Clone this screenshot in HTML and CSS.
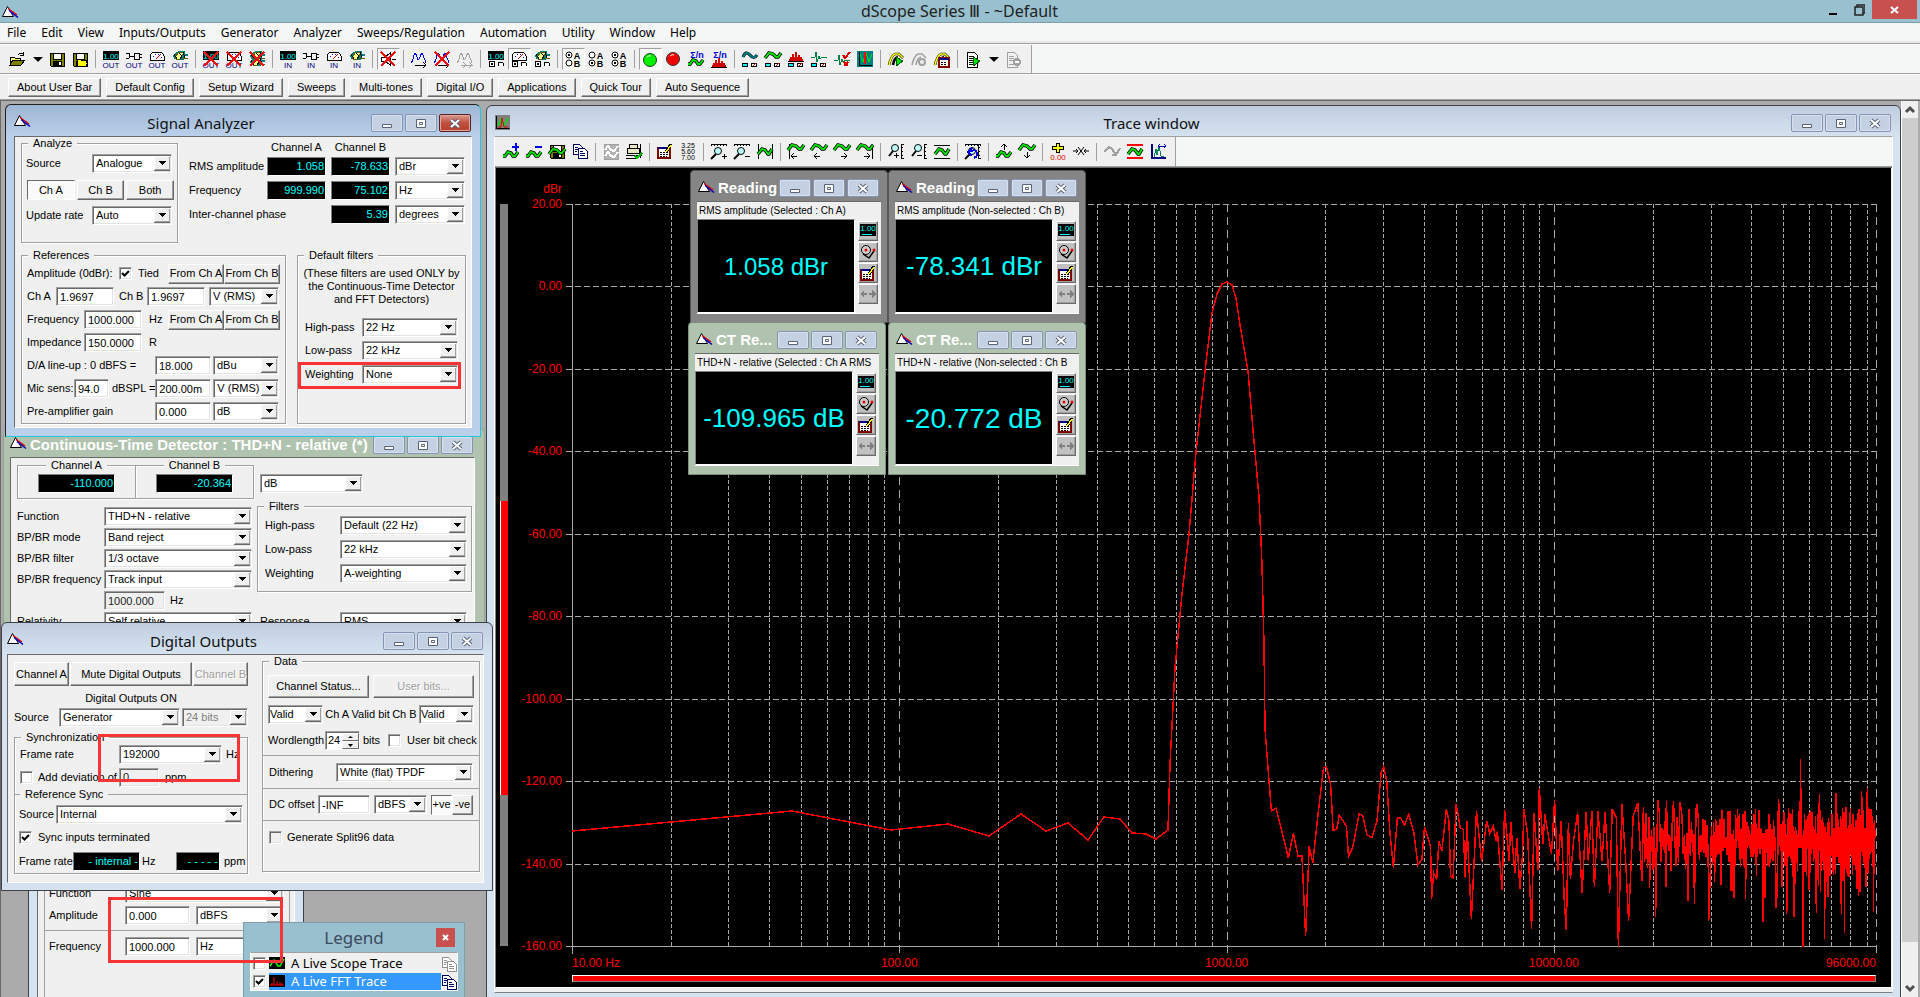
FILE: index.html
```html
<!DOCTYPE html>
<html lang="en">
<head>
<meta charset="utf-8">
<title>dScope Series III - ~Default</title>
<link rel="stylesheet" href="styles.css">
</head>
<body>
<svg class="defs" aria-hidden="true">
<defs>
<g id="logo"><path d="M0.500 11.500L5.500 1.500l6 10z" fill="#fff" stroke="#000"/><path d="M6 3.500l9 6.500" stroke="#e00000" stroke-width="1.500" fill="none"/><path d="M7 5.500l9 7" stroke="#0000c0" stroke-width="1.500" fill="none"/></g>
<g id="folder"><path d="M1 14V6h4l1 1h5v3" fill="#ffff80" stroke="#000"/><path d="M1 14l3-5h12l-4 5z" fill="#808000" stroke="#000"/></g>
<g id="open"><use href="#folder"/><path d="M9 4q2-3 5-1M14 1v3h-3" fill="none" stroke="#000"/></g>
<g id="disk"><path d="M1 2h14v13H2l-1-1z" fill="#808000" stroke="#000"/><path d="M4 2h8v6H4z" fill="#fff" stroke="#000"/><path d="M4 10h9v5H4z" fill="#000"/><path d="M10 11h2v3h-2z" fill="#fff"/></g>
<g id="disk2"><use href="#disk"/><path d="M5 15V8h3l1 1h5v2h2l-2 4z" fill="#ffff00" stroke="#000"/></g>
<g id="disp"><path d="M0 0h16v9H0z" fill="#000"/><text x="8" y="8" class="t8" fill="#00ffff">1.00</text></g>
<g id="out"><text x="8" y="17" class="t7" fill="#000080">OUT</text></g>
<g id="in"><text x="8" y="17" class="t7" fill="#000080">IN</text></g>
<g id="plug"><path d="M0 2h3l1 3h4M0 7h3l1-2M8 2h5v6H8zM13 3h3M13 6h3" fill="none" stroke="#000"/></g>
<g id="gauge"><path d="M1 9V5q1-3 4-4h6q3 1 4 4v4z" fill="#fff" stroke="#000"/><path d="M7 8l5-5" stroke="#e00000" fill="none"/><path d="M4 5h1M6 3h1M9 3h1M12 6h1" stroke="#00f"/></g>
<g id="fish"><path d="M1 5q3-5 8-5h4v3h3v2h-4v4H6Q2 9 1 5z" fill="#008080"/><path d="M3 6l4-5h5L8 8H4zM10 7h6" fill="#ffff80" stroke="#606000"/><path d="M7 2l3 3-2 3M11 1l2 6M2 3l3 5" stroke="#000" fill="none"/></g>
<g id="cross"><path d="M1 1l14 14M15 1L1 15" stroke="#ee1010" stroke-width="2"/></g>
<g id="radios"><circle cx="4" cy="13" r="3" fill="#fff" stroke="#000"/><circle cx="4" cy="13" r="1.5"/><path d="M10 15V12q2-2 5 0v3" fill="#fff" stroke="#000"/></g>
<g id="spk"><path d="M1 6h4l5-4v12l-5-4H1zM12 4l3-2M12 8h4M12 12l3 2" fill="none" stroke="#000"/></g>
<g id="sine"><path d="M0 12Q2 10 3 4q1-4 3 2 1 6 3 0 2-6 3-2l3 8" fill="none" stroke="#0000e0"/><path d="M4 14h11M12 11l3 3-3 3" fill="none" stroke="#000"/></g>
<g id="sineg"><path d="M0 12Q2 10 3 4q1-4 3 2 1 6 3 0 2-6 3-2l3 8M4 14h12M6 11l3 3-3 3M12 11l3 3-3 3" fill="none" stroke="#a0a0a0"/></g>
<g id="ab"><text x="12" y="8" class="t8b">A</text><text x="12" y="16" class="t8b">B</text></g>
<g id="r1"><circle cx="4" cy="4" r="3" fill="#fff" stroke="#000" class="soft"/></g>
<g id="r2"><circle cx="4" cy="12" r="3" fill="#fff" stroke="#000" class="soft"/></g>
<g id="d1"><circle cx="4" cy="4" r="1.6"/></g>
<g id="d2"><circle cx="4" cy="12" r="1.6"/></g>
<g id="green" class="soft"><circle cx="8" cy="9" r="6.5" fill="#00f000" stroke="#204020"/><path d="M5 6q2-2 4-1" stroke="#fff" fill="none"/></g>
<g id="red" class="soft"><circle cx="8" cy="8" r="6.5" fill="#f00000" stroke="#303030"/><path d="M5 5q2-2 4-1" stroke="#fff" fill="none"/></g>
<g id="sig"><text x="9" y="7" class="t8b" fill="#0000d0">Σ/n</text></g>
<g id="wave" class="soft"><path d="M0 13h2l3-4 3 1 2 3h2l3-4" fill="none" stroke="#000" stroke-width="3.500"/><path d="M0 13h2l3-4 3 1 2 3h2l3-4" fill="none" stroke="#00e000" stroke-width="2"/></g>
<g id="wavet" class="soft"><path d="M0 7l4-5 4 1 3 3h2l3-4" fill="none" stroke="#000" stroke-width="3.500"/><path d="M0 7l4-5 4 1 3 3h2l3-4" fill="none" stroke="#00e000" stroke-width="2"/></g>
<g id="teal" class="soft"><path d="M1 6q3-7 7-2t7 0" fill="none" stroke="#000" stroke-width="3"/><path d="M1 6q3-7 7-2t7 0" fill="none" stroke="#008080" stroke-width="2"/></g>
<g id="mini"><path d="M0.500 12.500h5v3h-5z" fill="#0ff" stroke="#000"/><path d="M9.500 12.500h5v3h-5z" fill="#fff" stroke="#000"/><path d="M11 15l3-3" stroke="#e00000"/></g>
<g id="fft"><path d="M1 9h14M2 7h12M5 3v5M8 1v7M11 4v4" stroke="#d00000" stroke-width="2" fill="none"/><path d="M0 10h16" stroke="#000"/></g>
<g id="imp"><path d="M0 6h4l1-5 1 10 2-6 1 3 2-2h5" stroke="#008040" fill="none"/></g>
<g id="check"><path d="M9 4l2 3 5-6" stroke="#e00000" stroke-width="2" fill="none"/><path d="M10 11l4 4M14 11l-4 4" stroke="#e00000" stroke-width="1.5"/></g>
<g id="scope"><path d="M0 0h16v16H0z" fill="#008080"/><path d="M2 1v13h13" stroke="#000" fill="none"/><path d="M3 3l3 8 3-9 3 9 3-8" stroke="#00e000" fill="none"/><path d="M8 1v12" stroke="#f00" stroke-width="2"/></g>
<g id="arch" class="soft"><path d="M1 14q2-9 6-11h4l4 4M5 14q1-7 5-8" fill="none" stroke="#000" stroke-width="2.500"/><path d="M1 14q2-9 6-11h4l4 4" fill="none" stroke="#ff0" stroke-width="1.500"/></g>
<g id="archg" class="soft"><path d="M1 14q2-9 6-11h4l4 4M5 14q1-7 5-8" fill="none" stroke="#a0a0a0" stroke-width="1.500"/><circle cx="11" cy="11" r="3" fill="none" stroke="#a0a0a0" stroke-width="2"/></g>
<g id="play"><path d="M8 6l7 4-7 5z" fill="#00e000" stroke="#006000"/></g>
<g id="table"><path d="M5 7h10v9H5z" fill="#fff" stroke="#800000" stroke-width="1.500"/><path d="M5 8h10" stroke="#000080" stroke-width="2"/><path d="M7 11h6M7 13h6" stroke="#000" stroke-dasharray="2 1"/></g>
<g id="doc"><path d="M2 1h7l3 3v12H2z" fill="#fff" stroke="#000"/><path d="M4 5h5M4 7h5M4 9h4M4 11h4M4 13h5" stroke="#000"/></g>
<g id="docg"><path d="M2 1h7l3 3v12H2z" fill="none" stroke="#a0a0a0"/><path d="M4 5h5M4 7h5M4 9h4M4 13h5" stroke="#a0a0a0"/><circle cx="12" cy="11" r="4" fill="#a0a0a0"/><path d="M10 11h4" stroke="#fff" stroke-width="2"/></g>
<g id="plus"><path d="M9 4h7M12.500 0v8" stroke="#0000e0" stroke-width="2"/></g>
<g id="minus"><path d="M9 4h7" stroke="#0000e0" stroke-width="2"/></g>
<g id="copy"><path d="M1 1h6l3 3v7H1z" fill="#fff" stroke="#000060"/><path d="M6 5h6l3 3v7H6z" fill="#fff" stroke="#000060"/><path d="M3 4h3M3 6h3M3 8h2M8 8h3M8 10h5M8 12h5" stroke="#000060"/></g>
<g id="copyg"><path d="M1 1h6l3 3v7H1z" fill="#fff" stroke="#909090"/><path d="M6 5h6l3 3v7H6z" fill="#fff" stroke="#909090"/><path d="M3 4h3M3 6h3M3 8h2M8 8h3M8 10h5M8 12h5" stroke="#909090"/></g>
<g id="wgray"><path d="M1 1h14v15H1z" fill="#b4b4b4" stroke="#a0a0a0"/><path d="M2 7l3-4 3 4 3 1 4-5M2 13l3-4 3 4 3 1 4-5" stroke="#fff" stroke-width="2" fill="none"/></g>
<g id="print"><path d="M4 1h8l-1 4H3zM1 5h12v5H1z" fill="#e8e8c0" stroke="#000"/><path d="M0 12h16M0 15h10M14 1v14" stroke="#000" fill="none"/><path d="M9 13l2 2 5-5" stroke="#00c000" stroke-width="2" fill="none"/></g>
<g id="grid"><path d="M1 5h12v10H1z" fill="#fff" stroke="#800000" stroke-width="1.500"/><path d="M1 5h12" stroke="#000080" stroke-width="2"/><path d="M3 9h9M3 11h9M3 13h7" stroke="#000" stroke-dasharray="2 1"/><path d="M9 9l5-8" stroke="#000" stroke-width="3"/><path d="M9 9l5-7" stroke="#ff0" stroke-width="1.500"/></g>
<g id="nums"><text x="8" y="5" class="t6">3.25</text><text x="8" y="11" class="t6">5.60</text><text x="8" y="17" class="t6">7.00</text></g>
<g id="ruler"><path d="M0 3V1h15v2M3 1v2M6 1v2M9 1v2M12 1v2" stroke="#000" fill="none"/></g>
<g id="lens" class="soft"><circle cx="7" cy="8" r="3.500" fill="#c0ffff" stroke="#000"/><path d="M5 11l-5 5" stroke="#000" stroke-width="2"/></g>
<g id="p"><path d="M11 13h5M13.500 11v5" stroke="#000"/></g>
<g id="m"><path d="M11 13h5" stroke="#000"/></g>
<g id="bars"><path d="M1 1v15M15 1v15" stroke="#000"/></g>
<g id="wmid" class="soft"><path d="M1 11l4-5 3 1 3 4h1l3-5" stroke="#000" stroke-width="3.500" fill="none"/><path d="M1 11l4-5 3 1 3 4h1l3-5" stroke="#00e000" stroke-width="2" fill="none"/></g>
<g id="al"><path d="M3 13h6M6 10l-3 3 3 3" stroke="#000" fill="none"/></g>
<g id="ar"><path d="M7 13h6M10 10l3 3-3 3" stroke="#000" fill="none"/></g>
<g id="vruler"><path d="M16 1h-3v14h3M13 4h2M13 8h2M13 12h2" stroke="#000" fill="none"/></g>
<g id="vlens" class="soft"><circle cx="7" cy="5" r="3.500" fill="#c0ffff" stroke="#000"/><path d="M5 8l-4 5" stroke="#000" stroke-width="2"/></g>
<g id="vp"><path d="M6 12h5M8.500 10v5" stroke="#000"/></g>
<g id="vm"><path d="M6 12h5" stroke="#000"/></g>
<g id="hl"><path d="M0 2h16M0 15h16" stroke="#000"/></g>
<g id="hlr"><path d="M0 2h16M0 15h16" stroke="#f00" stroke-width="1.500"/></g>
<g id="undo"><path d="M4 9q8-4 8 2 0 3-3 4M7 5L3 9l4 4" stroke="#0000e0" stroke-width="2" fill="none"/></g>
<g id="au"><path d="M8 7V1M5 4l3-3 3 3" stroke="#000" fill="none"/></g>
<g id="ad"><path d="M8 9v6M5 12l3 3 3-3" stroke="#000" fill="none"/></g>
<g id="cur"><path d="M6.500 0h3v3h4v3h-4v3h-3V6h-4V3h4z" fill="#ff0" stroke="#000"/><text x="8" y="17" class="t7" fill="#e00000">0.00</text></g>
<g id="star" class="soft"><path d="M0 8h5M11 8h5M5 4l6 8M11 4l-6 8M3 6l2 2-2 2M13 6l-2 2 2 2" stroke="#000" fill="none"/></g>
<g id="wg"><path d="M0 9l5-5 3 2 4 6 4-7M8 12h4" stroke="#a0a0a0" stroke-width="2" fill="none"/></g>
<g id="span"><path d="M2 1v14h14" stroke="#000080" stroke-width="1.500" fill="none"/><path d="M4 14l2-8 1 6 2-9 2 10 3 1" stroke="#008060" fill="none"/><path d="M8 3h8M10 1L8 3l2 2M14 1l2 2-2 2" stroke="#0000c0" fill="none"/></g>
<g id="bell" class="soft"><circle cx="6" cy="6" r="4.500" fill="#d0d0d0" stroke="#000"/><circle cx="6" cy="6" r="1.500" fill="#e00000"/><path d="M3 10l6 4 5-7" stroke="#000" fill="none" stroke-width="1.500"/><circle cx="14" cy="6" r="1.500" fill="#e00000"/></g>
<g id="lr"><path d="M0 8l4-4v8zM16 8l-4-4v8z" fill="#808080"/><path d="M3 7h4v2H3zM9 7h4v2H9z" fill="#808080"/></g>
<g id="dispu"><path d="M0 1h16v12H0z" fill="#000"/><text x="8" y="8" class="t8" fill="#00ffff">1.00</text><path d="M2 11h10" stroke="#0ff"/></g>
<g id="chart" class="soft"><path d="M0 0h15v15H0z" fill="#808080"/><path d="M1.500 1v12.500h13" stroke="#000" stroke-width="1" fill="none"/><path d="M3 11l3-7 3 7 4-8" stroke="#00e000" stroke-width="1.500" fill="none"/><path d="M3 12h3l1-9 2 9h4" stroke="#e00000" fill="none"/></g>
<g id="icoscope"><path d="M0 0h16v12H0z" fill="#000"/><path d="M1 9l4-6 4 6h2l4-7" stroke="#0f0" stroke-width="1.500" fill="none"/></g>
<g id="icofft"><path d="M0 0h16v12H0z" fill="#000"/><path d="M1 10h14M3 10V8M5 10V2M8 10V6M11 10V7M13 10V8" stroke="#f00" fill="none"/></g>
<g id="wmin"><path d="M10.500 9.500h9v3h-9z" fill="#fff" stroke="#5a6478"/></g>
<g id="wmax"><path d="M10.500 4.500h9v8h-9z" fill="#fff" stroke="#5a6478"/><path d="M13.500 7.500h3v2h-3z" fill="#fff" stroke="#5a6478"/></g>
<g id="wx"><path d="M11 5l8 7M19 5l-8 7" stroke="#5a6478" stroke-width="4"/><path d="M11 5l8 7M19 5l-8 7" stroke="#fff" stroke-width="2"/></g>
</defs>
</svg>

<div class="app">
<header class="titlebar">
  <svg class="ico logo"><use href="#logo"/></svg>
  <h1>dScope Series Ⅲ - ~Default</h1>
  <div class="syskeys">
    <button aria-label="Minimize"><svg class="sk"><path d="M1 11h8v2H1z"/></svg></button>
    <button aria-label="Restore"><svg class="sk"><path d="M1 5h8v8H1zM3 5V3h8v8H9" fill="none" stroke="#222" stroke-width="1.500"/></svg></button>
    <button class="x" aria-label="Close"><svg class="sk"><path d="M2 5l7 6M9 5l-7 6" stroke="#fff" stroke-width="2"/></svg></button>
  </div>
</header>
<nav class="menu"><a href="#">File</a><a href="#">Edit</a><a href="#">View</a><a href="#">Inputs/Outputs</a><a href="#">Generator</a><a href="#">Analyzer</a><a href="#">Sweeps/Regulation</a><a href="#">Automation</a><a href="#">Utility</a><a href="#">Window</a><a href="#">Help</a></nav>
<div class="toolstrip">
<div class="tools">
  <button><svg class="ico"><use href="#open"/></svg></button><button class="drop" aria-label="Open recent"></button><button><svg class="ico"><use href="#disk"/></svg></button><button><svg class="ico"><use href="#disk2"/></svg></button><i></i>
  <button><svg class="ico"><use href="#disp"/><use href="#out"/></svg></button><button><svg class="ico"><use href="#plug"/><use href="#out"/></svg></button><button><svg class="ico"><use href="#gauge"/><use href="#out"/></svg></button><button><svg class="ico"><use href="#fish"/><use href="#out"/></svg></button><i></i>
  <button><svg class="ico"><use href="#disp"/><use href="#out"/><use href="#cross"/></svg></button><button><svg class="ico"><use href="#gauge"/><use href="#out"/><use href="#cross"/></svg></button><button><svg class="ico"><use href="#fish"/><use href="#fish" y="6"/><use href="#cross"/></svg></button><i></i>
  <button><svg class="ico"><use href="#disp"/><use href="#in"/></svg></button><button><svg class="ico"><use href="#plug"/><use href="#in"/></svg></button><button><svg class="ico"><use href="#gauge"/><use href="#in"/></svg></button><button><svg class="ico"><use href="#fish"/><use href="#in"/></svg></button><i></i>
  <button class="on"><svg class="ico"><use href="#spk"/><use href="#cross"/></svg></button><i></i>
  <button><svg class="ico"><use href="#sine"/></svg></button><button><svg class="ico"><use href="#sine"/><use href="#cross"/></svg></button><button><svg class="ico"><use href="#sineg"/></svg></button><i></i>
  <button><svg class="ico"><use href="#disp"/><use href="#radios"/></svg></button><button class="on"><svg class="ico"><use href="#gauge"/><use href="#radios"/></svg></button><button><svg class="ico"><use href="#fish"/><use href="#radios"/></svg></button><i></i>
  <button class="on"><svg class="ico"><use href="#r1"/><use href="#r2"/><use href="#d1"/><use href="#ab"/></svg></button><button><svg class="ico"><use href="#r1"/><use href="#r2"/><use href="#d2"/><use href="#ab"/></svg></button><button><svg class="ico"><use href="#r1"/><use href="#r2"/><use href="#d1"/><use href="#d2"/><use href="#ab"/></svg></button><i></i>
  <button class="on"><svg class="ico"><use href="#green"/></svg></button><button><svg class="ico"><use href="#red"/></svg></button><button><svg class="ico"><use href="#wave"/><use href="#sig"/></svg></button><button><svg class="ico"><use href="#fft" y="6"/><use href="#sig"/></svg></button><i></i>
  <button><svg class="ico"><use href="#teal"/><use href="#mini"/></svg></button><button><svg class="ico"><use href="#wavet"/><use href="#mini"/></svg></button><button><svg class="ico"><use href="#fft"/><use href="#mini"/></svg></button><button><svg class="ico"><use href="#imp"/><use href="#mini"/></svg></button><button><svg class="ico"><use href="#imp" y="3"/><use href="#check"/></svg></button><button><svg class="ico"><use href="#scope"/></svg></button><i></i>
  <button><svg class="ico"><use href="#arch"/><use href="#play"/></svg></button><button><svg class="ico"><use href="#archg"/></svg></button><button><svg class="ico"><use href="#arch"/><use href="#table"/></svg></button><i></i>
  <button><svg class="ico"><use href="#doc"/><use href="#play"/></svg></button><button class="drop" aria-label="Run recent"></button><button><svg class="ico"><use href="#docg"/></svg></button>
</div>
</div>
<div class="userbar"><button>About User Bar</button><button>Default Config</button><button>Setup Wizard</button><button>Sweeps</button><button>Multi-tones</button><button>Digital I/O</button><button>Applications</button><button>Quick Tour</button><button>Auto Sequence</button></div>

<main class="desk">

<section class="win trace">
  <header class="cap"><svg class="ico"><use href="#chart"/></svg><h2>Trace window</h2><div class="keys"><button aria-label="Minimize"><svg><use href="#wmin"/></svg></button><button aria-label="Maximize"><svg><use href="#wmax"/></svg></button><button aria-label="Close"><svg><use href="#wx"/></svg></button></div></header>
  <div class="tracebody">
  <div class="toolstrip"><div class="tools">
    <button><svg class="ico"><use href="#wave"/><use href="#plus"/></svg></button><button><svg class="ico"><use href="#wave"/><use href="#minus"/></svg></button><button><svg class="ico"><use href="#disk"/><use href="#wavet" y="4"/></svg></button><button><svg class="ico"><use href="#copy"/></svg></button><i></i>
    <button><svg class="ico"><use href="#wgray"/></svg></button><button><svg class="ico"><use href="#print"/></svg></button><i></i>
    <button><svg class="ico"><use href="#grid"/></svg></button><button><svg class="ico"><use href="#nums"/></svg></button><i></i>
    <button><svg class="ico"><use href="#ruler"/><use href="#lens"/><use href="#p"/></svg></button><button><svg class="ico"><use href="#ruler"/><use href="#lens"/><use href="#m"/></svg></button><button><svg class="ico"><use href="#bars"/><use href="#wmid"/></svg></button><i></i>
    <button><svg class="ico"><path d="M1 1v15" stroke="#000"/><use href="#wavet"/><use href="#al"/></svg></button><button><svg class="ico"><use href="#wavet"/><use href="#al"/></svg></button><button><svg class="ico"><use href="#wavet"/><use href="#ar"/></svg></button><button><svg class="ico"><path d="M15 1v15" stroke="#000"/><use href="#wavet"/><use href="#ar"/></svg></button><i></i>
    <button><svg class="ico"><use href="#vlens"/><use href="#vp"/><use href="#vruler"/></svg></button><button><svg class="ico"><use href="#vlens"/><use href="#vm"/><use href="#vruler"/></svg></button><button><svg class="ico"><use href="#hl"/><use href="#wmid"/></svg></button><i></i>
    <button><svg class="ico"><use href="#ruler"/><use href="#vruler"/><use href="#lens"/><use href="#undo"/></svg></button><i></i>
    <button><svg class="ico"><use href="#wave"/><use href="#au"/></svg></button><button><svg class="ico"><use href="#wavet"/><use href="#ad"/></svg></button><i></i>
    <button><svg class="ico"><use href="#cur"/></svg></button><button><svg class="ico"><use href="#star"/></svg></button><i></i>
    <button><svg class="ico"><use href="#wg"/></svg></button><button><svg class="ico"><use href="#hlr"/><use href="#wmid"/></svg></button><button><svg class="ico"><use href="#span"/></svg></button>
  </div></div>
  <div class="chart">
    <div class="unit">dBr</div>
    <div class="yaxis">
      <div class="vbar"><span></span></div>
      <ol><li>20.00</li><li>0.00</li><li>-20.00</li><li>-40.00</li><li>-60.00</li><li>-80.00</li><li>-100.00</li><li>-120.00</li><li>-140.00</li><li>-160.00</li></ol>
    </div>
    <svg class="plot" viewBox="0 0 1304 742" preserveAspectRatio="none"><g id="gridlines"></g><polyline id="fftline"/></svg>
    <div class="xaxis">
      <div class="xlabels"><span>10.00 Hz</span><span>100.00</span><span>1000.00</span><span>10000.00</span><span>96000.00</span></div>
      <div class="hbar"></div>
    </div>
  </div>
  </div>
</section>

<section class="win reading ra">
  <header class="cap"><svg class="ico logo"><use href="#logo"/></svg><h2>Reading</h2><div class="keys"><button aria-label="Minimize"><svg><use href="#wmin"/></svg></button><button aria-label="Maximize"><svg><use href="#wmax"/></svg></button><button aria-label="Close"><svg><use href="#wx"/></svg></button></div></header>
  <div class="rbody"><p>RMS amplitude (Selected : Ch A)</p><output class="s24">1.058 dBr</output><div class="rkeys"><button aria-label="Digits"><svg class="ico"><use href="#dispu"/></svg></button><button aria-label="Alarm"><svg class="ico"><use href="#bell"/></svg></button><button aria-label="Table"><svg class="ico"><use href="#grid"/></svg></button><button disabled aria-label="Resize"><svg class="ico"><use href="#lr"/></svg></button></div></div>
</section>
<section class="win reading rb">
  <header class="cap"><svg class="ico logo"><use href="#logo"/></svg><h2>Reading</h2><div class="keys"><button aria-label="Minimize"><svg><use href="#wmin"/></svg></button><button aria-label="Maximize"><svg><use href="#wmax"/></svg></button><button aria-label="Close"><svg><use href="#wx"/></svg></button></div></header>
  <div class="rbody"><p>RMS amplitude (Non-selected : Ch B)</p><output class="s26">-78.341 dBr</output><div class="rkeys"><button aria-label="Digits"><svg class="ico"><use href="#dispu"/></svg></button><button aria-label="Alarm"><svg class="ico"><use href="#bell"/></svg></button><button aria-label="Table"><svg class="ico"><use href="#grid"/></svg></button><button disabled aria-label="Resize"><svg class="ico"><use href="#lr"/></svg></button></div></div>
</section>
<section class="win reading ct ca">
  <header class="cap"><svg class="ico logo"><use href="#logo"/></svg><h2>CT Re...</h2><div class="keys"><button aria-label="Minimize"><svg><use href="#wmin"/></svg></button><button aria-label="Maximize"><svg><use href="#wmax"/></svg></button><button aria-label="Close"><svg><use href="#wx"/></svg></button></div></header>
  <div class="rbody"><p>THD+N - relative (Selected : Ch A RMS</p><output class="s26">-109.965 dB</output><div class="rkeys"><button aria-label="Digits"><svg class="ico"><use href="#dispu"/></svg></button><button aria-label="Alarm"><svg class="ico"><use href="#bell"/></svg></button><button aria-label="Table"><svg class="ico"><use href="#grid"/></svg></button><button disabled aria-label="Resize"><svg class="ico"><use href="#lr"/></svg></button></div></div>
</section>
<section class="win reading ct cb">
  <header class="cap"><svg class="ico logo"><use href="#logo"/></svg><h2>CT Re...</h2><div class="keys"><button aria-label="Minimize"><svg><use href="#wmin"/></svg></button><button aria-label="Maximize"><svg><use href="#wmax"/></svg></button><button aria-label="Close"><svg><use href="#wx"/></svg></button></div></header>
  <div class="rbody"><p>THD+N - relative (Non-selected : Ch B</p><output class="s28">-20.772 dB</output><div class="rkeys"><button aria-label="Digits"><svg class="ico"><use href="#dispu"/></svg></button><button aria-label="Alarm"><svg class="ico"><use href="#bell"/></svg></button><button aria-label="Table"><svg class="ico"><use href="#grid"/></svg></button><button disabled aria-label="Resize"><svg class="ico"><use href="#lr"/></svg></button></div></div>
</section>

<section class="win gen">
  <div class="client"><div class="genbox">
    <div class="row"><label for="gf">Function</label><select id="gf"><option>Sine</option></select></div>
    <div class="row"><label for="ga">Amplitude</label><input id="ga" value="0.000"><select aria-label="Amplitude unit"><option>dBFS</option></select></div>
    <div class="row cut"><label for="gq">Frequency</label><input id="gq" value="1000.000"><select aria-label="Frequency unit"><option>Hz</option></select></div>
  </div></div>
</section>

<section class="win detector">
  <header class="cap"><svg class="ico logo"><use href="#logo"/></svg><h2>Continuous-Time Detector : THD+N - relative (*)</h2><div class="keys"><button aria-label="Minimize"><svg><use href="#wmin"/></svg></button><button aria-label="Maximize"><svg><use href="#wmax"/></svg></button><button aria-label="Close"><svg><use href="#wx"/></svg></button></div></header>
  <div class="client">
    <div class="chans">
      <fieldset><legend>Channel A</legend><output class="lcd">-110.000</output></fieldset>
      <fieldset><legend>Channel B</legend><output class="lcd">-20.364</output></fieldset>
      <select aria-label="Unit"><option>dB</option></select>
    </div>
    <div class="cols">
      <div class="left">
        <div class="row"><label for="d1f">Function</label><select id="d1f"><option>THD+N - relative</option></select></div>
        <div class="row"><label for="d2f">BP/BR mode</label><select id="d2f"><option>Band reject</option></select></div>
        <div class="row"><label for="d3f">BP/BR filter</label><select id="d3f"><option>1/3 octave</option></select></div>
        <div class="row"><label for="d4f">BP/BR frequency</label><select id="d4f"><option>Track input</option></select></div>
        <div class="row"><label for="d5f"></label><input id="d5f" value="1000.000" disabled><span>Hz</span></div>
        <div class="row"><label for="d6f">Relativity</label><select id="d6f"><option>Self relative</option></select></div>
      </div>
      <div class="right">
        <fieldset><legend>Filters</legend>
          <div class="row"><label for="e1">High-pass</label><select id="e1"><option>Default (22 Hz)</option></select></div>
          <div class="row"><label for="e2">Low-pass</label><select id="e2"><option>22 kHz</option></select></div>
          <div class="row"><label for="e3">Weighting</label><select id="e3"><option>A-weighting</option></select></div>
        </fieldset>
        <div class="row resp"><label for="e4">Response</label><select id="e4"><option>RMS</option></select></div>
      </div>
    </div>
  </div>
</section>

<section class="win signal">
  <header class="cap"><svg class="ico logo"><use href="#logo"/></svg><h2>Signal Analyzer</h2><div class="keys"><button aria-label="Minimize"><svg><use href="#wmin"/></svg></button><button aria-label="Maximize"><svg><use href="#wmax"/></svg></button><button class="hot" aria-label="Close"><svg><use href="#wx"/></svg></button></div></header>
  <div class="client">
    <div class="top">
      <fieldset class="analyze"><legend>Analyze</legend>
        <div class="row"><label for="s1">Source</label><select id="s1"><option>Analogue</option></select></div>
        <div class="trio"><button class="b on">Ch A</button><button class="b">Ch B</button><button class="b">Both</button></div>
        <div class="row"><label for="s2">Update rate</label><select id="s2"><option>Auto</option></select></div>
      </fieldset>
      <div class="meas">
        <span></span><span class="mid">Channel A</span><span class="mid">Channel B</span><span></span>
        <span>RMS amplitude</span><output class="lcd">1.058</output><output class="lcd">-78.633</output><select aria-label="Amplitude unit"><option>dBr</option></select>
        <span>Frequency</span><output class="lcd">999.990</output><output class="lcd">75.102</output><select aria-label="Frequency unit"><option>Hz</option></select>
        <span class="two">Inter-channel phase</span><output class="lcd">5.39</output><select aria-label="Phase unit"><option>degrees</option></select>
      </div>
    </div>
    <div class="bottom">
      <fieldset class="refs"><legend>References</legend>
        <div class="row"><span class="w92">Amplitude (0dBr):</span><input type="checkbox" id="tied" checked><label class="tied" for="tied">Tied</label><button class="b">From Ch A</button><button class="b">From Ch B</button></div>
        <div class="row"><label class="w29" for="r1i">Ch A</label><input id="r1i" class="f58" value="1.9697"><label class="chb" for="r2i">Ch B</label><input id="r2i" class="f58" value="1.9697"><select class="f70 end" aria-label="Reference unit"><option>V (RMS)</option></select></div>
        <div class="row"><label class="w57" for="r3i">Frequency</label><input id="r3i" class="f58" value="1000.000"><span class="u">Hz</span><button class="b">From Ch A</button><button class="b">From Ch B</button></div>
        <div class="row"><label class="w57" for="r4i">Impedance</label><input id="r4i" class="f58" value="150.0000"><span class="u">R</span></div>
        <div class="row"><label class="grow" for="r5i">D/A line-up : 0 dBFS =</label><input id="r5i" class="f55" value="18.000"><select class="f66" aria-label="Line-up unit"><option>dBu</option></select></div>
        <div class="row"><label class="w47" for="r6i">Mic sens:</label><input id="r6i" class="f35" value="94.0"><label class="grow spl" for="r7i">dBSPL =</label><input id="r7i" class="f55" value="200.00m"><select class="f66" aria-label="Sensitivity unit"><option>V (RMS)</option></select></div>
        <div class="row"><label class="grow" for="r8i">Pre-amplifier gain</label><input id="r8i" class="f55" value="0.000"><select class="f66" aria-label="Gain unit"><option>dB</option></select></div>
      </fieldset>
      <fieldset class="dflt"><legend>Default filters</legend>
        <p>(These filters are used ONLY by<br>the Continuous-Time Detector<br>and FFT Detectors)</p>
        <div class="row"><label for="f1">High-pass</label><select id="f1"><option>22 Hz</option></select></div>
        <div class="row"><label for="f2">Low-pass</label><select id="f2"><option>22 kHz</option></select></div>
        <div class="row wt"><label for="f3">Weighting</label><select id="f3"><option>None</option></select></div>
      </fieldset>
    </div>
  </div>
</section>

<section class="win digital">
  <header class="cap"><svg class="ico logo"><use href="#logo"/></svg><h2>Digital Outputs</h2><div class="keys"><button aria-label="Minimize"><svg><use href="#wmin"/></svg></button><button aria-label="Maximize"><svg><use href="#wmax"/></svg></button><button aria-label="Close"><svg><use href="#wx"/></svg></button></div></header>
  <div class="client">
    <div class="dleft">
      <div class="mutes"><button class="b">Channel A</button><button class="b wide">Mute Digital Outputs</button><button class="b" disabled>Channel B</button></div>
      <p class="state">Digital Outputs ON</p>
      <div class="row src"><label for="o1">Source</label><select id="o1"><option>Generator</option></select><select class="f66" aria-label="Word size" disabled><option>24 bits</option></select></div>
      <fieldset><legend>Synchronization</legend>
        <div class="row rate"><label for="o2">Frame rate</label><select id="o2"><option>192000</option></select><span>Hz</span></div>
        <div class="row dev"><input type="checkbox" id="o3"><label for="o3">Add deviation of</label><input aria-label="Deviation" value="0" disabled><span>ppm</span></div>
        <h3>Reference Sync</h3>
        <div class="row rsrc"><label for="o4">Source</label><select id="o4"><option>Internal</option></select></div>
        <div class="row term"><input type="checkbox" id="o5" checked><label for="o5">Sync inputs terminated</label></div>
        <div class="row fr"><span>Frame rate</span><output class="lcd a">- internal -</output><span class="hz">Hz</span><output class="lcd c">- - - - -</output><span>ppm</span></div>
      </fieldset>
    </div>
    <fieldset class="data"><legend>Data</legend>
      <div class="sec s1"><div class="two-b"><button class="b">Channel Status...</button><button class="b" disabled>User bits...</button></div>
      <div class="row valid"><select id="v1"><option>Valid</option></select><label for="v1">Ch A</label><span>Valid bit</span><label for="v2">Ch B</label><select id="v2"><option>Valid</option></select></div>
      <div class="row wl"><label for="v3">Wordlength</label><span class="spin"><input id="v3" value="24"><span><button aria-label="Up"><svg><path d="M5 4h5L7.500 2z"/></svg></button><button aria-label="Down"><svg><path d="M5 2h5L7.500 5z"/></svg></button></span></span><span class="bits">bits</span><input type="checkbox" id="v4"><label for="v4">User bit check</label></div></div>
      <div class="sec row dith"><label for="v5">Dithering</label><select id="v5"><option>White (flat) TPDF</option></select></div>
      <div class="sec row dc"><label for="v6">DC offset</label><input id="v6" value="-INF"><select aria-label="Offset unit"><option>dBFS</option></select><button class="b on">+ve</button><button class="b">-ve</button></div>
      <div class="sec row split"><input type="checkbox" class="off" id="v7"><label for="v7">Generate Split96 data</label></div>
    </fieldset>
  </div>
</section>

<section class="win legend">
  <header><h2>Legend</h2><button aria-label="Close"><svg><path d="M7 7l5 5M12 7l-5 5" stroke="#fff" stroke-width="2"/></svg></button></header>
  <ul>
    <li><input type="checkbox" id="l1"><label for="l1"><svg class="tr"><use href="#icoscope"/></svg>A Live Scope Trace</label><svg class="ico"><use href="#copyg"/></svg></li>
    <li class="sel"><input type="checkbox" id="l2" checked><label for="l2"><svg class="tr"><use href="#icofft"/></svg>A Live FFT Trace</label><svg class="ico"><use href="#copy"/></svg></li>
  </ul>
</section>

<div class="mark m1"></div><div class="mark m2"></div><div class="mark m3"></div>

<div class="scroll"><svg><path d="M4 11l4-4 4 4" fill="none" stroke="#505050" stroke-width="3"/></svg><span></span><svg><path d="M4 6l4 4 4-4" fill="none" stroke="#505050" stroke-width="3"/></svg></div>
</main>
</div>
<script src="chart.js"></script>
</body>
</html>
```
FILE: styles.css
```css
* { box-sizing: border-box; }
body { margin: 0; font: 11px/13px "Liberation Sans", Arial, sans-serif; color: #000; background: #ababab; }
h1, h2, h3, p, ul, ol { margin: 0; padding: 0; font-weight: normal; list-style: none; }
.defs { position: absolute; width: 0; height: 0; }
.app { display: flex; flex-direction: column; height: 100vh; overflow: hidden; }
button, input, select { font: inherit; color: inherit; margin: 0; padding: 0; border-radius: 0; min-width: 0; }
.ico { width: 17px; height: 17px; flex: none; overflow: visible; shape-rendering: crispEdges; }
.logo, .soft { shape-rendering: auto; }
text { font-family: "Liberation Sans", Arial, sans-serif; text-anchor: middle; }
.t8 { font-size: 8px; }
.t7 { font-size: 8px; }
.t6 { font-size: 7px; }
.t8b { font-size: 9px; font-weight: bold; }

/* main frame */
.titlebar { display: flex; align-items: center; height: 23px; padding: 0 3px 0 2px; background: #98c0ce; border-bottom: 1px solid #7d9faa; }
.titlebar .ico { margin-top: 4px; }
.titlebar h1 { flex: 1; text-align: center; font: 16px/22px "Noto Sans", sans-serif; color: #222; padding-left: 80px; }
.syskeys { display: flex; align-self: flex-start; }
.syskeys button { width: 26px; height: 19px; border: 0; background: none; }
.syskeys .x { width: 45px; background: #c8504f; }
.sk { width: 11px; height: 16px; display: block; margin: auto; }
.menu { display: flex; height: 22px; gap: 15px; padding: 1px 7px 0; background: #f5f6f6; border-bottom: 1px solid #fff; box-shadow: inset 0 -1px #a0a0a0, inset 0 -3px #e8e8e8; }
.menu a { color: #000; text-decoration: none; font: 12px/18px "Noto Sans", sans-serif; }
.toolstrip { display: flex; height: 30px; background: #f5f6f6; border-bottom: 1px solid #fff; box-shadow: inset 0 -1px #a0a0a0; padding-bottom: 1px; }
.tools { display: flex; align-items: center; padding: 0 6px; background: #f0f0f0; border-right: 1px solid #a0a0a0; }
.tools button { width: 23px; height: 22px; border: 1px solid transparent; background: none; display: flex; justify-content: center; align-items: center; }
.tools button.on { background: #f8f8f8; border-color: #a0a0a0 #fff #fff #a0a0a0; }
.tools button.drop { width: 17px; }
.drop::before { content: ""; border: 5px solid transparent; border-top-color: #000; border-bottom: 0; }
.tools i { width: 8px; height: 18px; background: linear-gradient(#a0a0a0, #a0a0a0) 3px 0 / 1px 100% no-repeat; }
.userbar { display: flex; gap: 5px; height: 26px; padding: 3px 8px 0; background: #f0f0f0; border-bottom: 1px solid #696969; box-shadow: inset 0 -1px #a0a0a0; }
.userbar button { height: 19px; padding: 0 8px; }
.userbar button, .b, .rkeys button { background: #f0f0f0; border: 1px solid; border-color: #fff #696969 #696969 #fff; box-shadow: inset -1px -1px #a0a0a0; white-space: nowrap; }
.b { height: 20px; padding: 0; }
.b.on { background: #fafafa; border-color: #696969 #fff #fff #696969; box-shadow: none; }
.b:disabled { color: #a0a0a0; text-shadow: 1px 1px #fff; }
.desk { position: relative; flex: 1; overflow: hidden; background: #ababab; border-left: 1px solid #696969; }

/* windows */
.win { position: absolute; border: 1px solid #404048; border-radius: 6px 6px 0 0; background: #d5e3f0; display: flex; flex-direction: column; padding: 0 8px 8px; }
.cap { display: flex; align-items: center; flex: none; height: 31px; padding: 4px 1px 0 0; }
.cap h2 { flex: 1; text-align: center; font: 15px/24px "Noto Sans", sans-serif; white-space: nowrap; overflow: hidden; color: #111; }
.keys { display: flex; gap: 2px; }
.keys button { width: 32px; height: 18px; border: 1px solid #8594b4; border-radius: 2px; background: #c3d1e3; box-shadow: inset 0 0 0 1px #d6e1ee; }
.keys svg { display: block; width: 30px; height: 16px; }
.keys .hot { border-color: #5a2020; background: linear-gradient(#d89a90, #c0503c 50%, #b84030); box-shadow: inset 0 0 0 1px #e0a8a0; }
.client { background: #f0f0f0; border: 1px solid; border-color: #696969 #fff #fff #696969; flex: 1; min-height: 0; }
fieldset { margin: 0; padding: 0; border: 1px solid #a0a0a0; min-width: 0; box-shadow: 1px 1px #fff, inset 1px 1px #fff; }
legend { padding: 0 5px; margin-left: 6px; background: #f0f0f0; line-height: 13px; }
.row { display: flex; align-items: center; white-space: nowrap; }
.row > * { flex: none; }
input:not([type]), select { height: 19px; border: 1px solid; border-color: #a0a0a0 #fff #fff #a0a0a0; box-shadow: inset 1px 1px #696969, inset -1px -1px #e3e3e3; background: #fff; padding: 0 3px; }
select { appearance: none; background: #fff url("data:image/svg+xml,%3Csvg xmlns='http://www.w3.org/2000/svg' width='17' height='15'%3E%3Cpath d='M0 0h17v15H0z' fill='%23696969'/%3E%3Cpath d='M0 0h16v14H0z' fill='%23fff'/%3E%3Cpath d='M1 1h15v13H1z' fill='%23a0a0a0'/%3E%3Cpath d='M1 1h14v12H1z' fill='%23f0f0f0'/%3E%3Cpath d='M5 5h7v1h-1v1h-1v1H9v1H8V8H7V7H6V6H5z'/%3E%3C/svg%3E") right 0 center no-repeat; padding-right: 17px; overflow: hidden; }
select:disabled, input:disabled { background-color: #f0f0f0; opacity: 1; color: #808080; }
input:not([type]):disabled { color: #222; background-color: #f0f0f0; }
input[type=checkbox] { appearance: none; width: 13px; height: 13px; border: 1px solid; border-color: #a0a0a0 #fff #fff #a0a0a0; box-shadow: inset 1px 1px #696969, inset -1px -1px #e3e3e3; background: #fff; }
input[type=checkbox]:checked { background: #fff url("data:image/svg+xml,%3Csvg xmlns='http://www.w3.org/2000/svg' width='11' height='11'%3E%3Cpath d='M2 5l2.500 2.500L9 3' fill='none' stroke='%23000' stroke-width='2'/%3E%3C/svg%3E") center no-repeat; }
input.off[type=checkbox] { background: #f0f0f0; }
.lcd { display: block; height: 19px; background: #000; color: #0ff; text-align: right; line-height: 17px; padding-right: 1px; border: 1px solid; border-color: #808080 #fff #fff #808080; overflow: hidden; white-space: nowrap; }

/* trace window */
.trace { left: 485px; right: 19px; top: 4px; bottom: -5px; background: linear-gradient(#bfcde0, #d5e3f0 31px); padding: 0 7px 8px; }
.trace .cap { height: 30px; padding: 4px 2px 0 1px; }
.tracebody { flex: 1; display: flex; flex-direction: column; min-height: 0; background: #f0f0f0; border: 1px solid; border-color: #a0a0a0 #fff #808080 #fff; padding-bottom: 4px; }
.tracebody .toolstrip { flex: none; height: 31px; border-bottom-color: #696969; }
.tracebody .tools { padding: 0 5px; }
.chart { flex: 1; min-height: 0; display: grid; grid-template: 36px minmax(0, 1fr) 41px / 76px minmax(0, 1fr) 15px; background: #000; color: #f00; border-left: 1px solid #808080; margin-right: 1px; font-size: 12px; line-height: 14px; border-bottom: 1px solid #fff; }
.unit { text-align: right; padding: 14px 10px 0 0; }
.yaxis { grid-area: 2 / 1; display: flex; justify-content: space-between; padding: 0 10px 0 4px; }
.vbar { width: 8px; background: #808080; display: flex; flex-direction: column; }
.vbar span { flex: 0 0 294px; margin-top: 297px; background: #f00; border-left: 1px solid #fff; }
.yaxis ol { display: flex; flex-direction: column; justify-content: space-between; }
.yaxis li { height: 0; display: flex; align-items: center; justify-content: flex-end; }
.plot { grid-area: 2 / 2; width: 100%; height: 100%; overflow: visible; shape-rendering: crispEdges; }
.plot line { stroke: #a8a8a8; stroke-width: 1; }
.plot .minor { stroke-dasharray: 4 2; }
.plot .major { stroke-dasharray: 8 5; }
.plot .level { stroke-dasharray: 6 3; }
#fftline { fill: none; stroke: #f00; stroke-width: 1.5; }
.xaxis { grid-area: 3 / 2; display: flex; flex-direction: column; justify-content: space-between; padding: 10px 0 5px; }
.xlabels { display: flex; text-align: center; }
.xlabels span { width: 25.1%; }
.xlabels span:first-child { width: 12.55%; text-align: left; }
.xlabels span:last-child { width: 12.15%; text-align: right; }
.hbar { height: 7px; background: #f00; border: 1px solid; border-color: #fff #808080 #808080 #fff; }

/* reading windows */
.reading { width: 198px; height: 153px; background: #858585; border-color: #5a5558; padding: 0 6px 8px; border-radius: 4px 4px 0 0; }
.reading .cap { height: 30px; padding: 4px 2px 0 1px; }
.reading h2, .detector h2 { font: bold 15px/20px "Liberation Sans", Arial, sans-serif; color: #fff; text-align: left; padding-left: 3px; }
.ra { left: 689px; top: 69px; }
.rb { left: 887px; top: 69px; }
.ct { background: #afc3ae; border-color: #7f927e; }
.ca { left: 687px; top: 221px; }
.cb { left: 887px; top: 221px; }
.rbody { flex: 1; display: grid; grid-template: 17px minmax(0, 1fr) / minmax(0, 1fr) 26px; background: #f0f0f0; border-top: 1px solid #696969; border-bottom: 1px solid #fff; }
.rbody p { grid-column: 1 / 3; padding: 2px 0 0 2px; white-space: nowrap; overflow: hidden; font-size: 10px; }
.rbody output { background: #000; color: #0ff; display: flex; align-items: center; justify-content: center; white-space: nowrap; border: 1px solid; border-color: #808080 #fff #fff #808080; }
.s24 { font-size: 24px; }
.s26 { font-size: 26px; }
.s28 { font-size: 28px; }
.rkeys { display: flex; flex-direction: column; align-items: center; gap: 1px; padding-top: 2px; }
.rkeys button { width: 20px; height: 20px; background: #c0c0c0; display: flex; justify-content: center; align-items: center; }
.rkeys .ico { width: 16px; height: 16px; }

/* generator */
.gen { left: 27px; top: 780px; width: 276px; height: 140px; padding: 0 8px; }
.gen .client { padding: 0 4px 0 6px; }
.genbox { height: 100%; border: 1px solid #a0a0a0; border-top: 0; padding-top: 1px; }
.gen .row { height: 25px; padding-left: 4px; }
.gen .row:first-child { height: 19px; }
.gen label { width: 76px; }
.gen input { width: 65px; margin-right: 6px; }
.gen select { width: 88px; }
.gen .row:first-child select { width: 159px; }
.gen .row.cut { height: 32px; border-top: 1px solid #a0a0a0; margin-top: 2px; }

/* detector */
.detector { left: 2px; top: 327px; width: 482px; height: 215px; background: #afc3ae; border-color: #93a592; padding: 0 9px 0 6px; }
.detector .cap { height: 28px; padding: 3px 2px 0 0; }
.detector .client { padding: 1px 0 0 6px; }
.chans { display: flex; height: 41px; }
.chans fieldset { width: 119px; height: 40px; }
.chans fieldset + fieldset { margin-left: -1px; }
.chans legend { margin: 0 auto; }
.chans .lcd { width: 77px; margin: 2px auto 0; }
.chans fieldset:first-child .lcd { margin-left: 20px; }
.chans select { width: 103px; margin: 15px 0 0 6px; }
.cols { display: flex; gap: 6px; }
.left { padding-top: 7px; display: flex; flex-direction: column; gap: 2px; }
.left label { width: 87px; }
.left select { width: 148px; }
.left input { width: 61px; }
.left span { margin-left: 5px; }
.right { margin-left: -1px; }
.right fieldset { width: 215px; height: 92px; }
.right .row { height: 24px; }
.right fieldset label { padding-left: 7px; width: 82px; }
.right select { width: 127px; }
.right .resp { margin-top: 17px; padding-left: 3px; }
.right .resp label { width: 80px; }

/* signal analyzer */
.signal { left: 4px; top: 3px; width: 476px; height: 333px; background: linear-gradient(#9db6d4, #bad0ea 32px); border-color: #202020 #20c8dc #20c8dc #202020; }
.signal .client { padding: 0 5px 0 6px; }
.top { display: flex; justify-content: space-between; }
.analyze { width: 157px; height: 106px; }
.analyze .row { height: 21px; margin-top: 3px; padding-left: 4px; }
.analyze label { width: 66px; }
.analyze select { width: 80px; }
.trio { display: flex; gap: 2px; margin: 6px 3px 5px 5px; }
.trio .b { flex: 1; }
.meas { display: grid; grid-template-columns: 73px 59px 59px 70px; gap: 5px; grid-template-rows: 14px; grid-auto-rows: 19px; align-items: center; padding: 1px 1px 0 0; }
.meas > span { white-space: nowrap; }
.mid { text-align: center; padding-top: 4px; }
.two { grid-column: span 2; }
.bottom { display: flex; justify-content: space-between; margin-top: 6px; }
.refs { width: 265px; height: 175px; }
.refs .row { height: 23px; padding: 0 6px 0 5px; }
.refs .b { width: 56px; }
.w92 { width: 92px; }
.w29 { width: 29px; }
.w57 { width: 57px; }
.w47 { width: 47px; }
.tied { width: 36px; padding-left: 6px; }
.chb { width: 33px; padding-left: 5px; }
.u { width: 26px; padding-left: 7px; }
.spl { padding-left: 3px; }
.row > .grow { flex: 1; }
.f58 { width: 58px; }
.f55 { width: 56px; }
.f35 { width: 35px; }
.f66 { width: 66px; margin-left: 2px; }
.f70 { width: 70px; }
.end { margin-left: 4px; }
.dflt { width: 169px; height: 175px; }
.dflt p { text-align: center; margin: 5px 0 10px; }
.dflt .row { height: 23px; padding-left: 7px; }
.dflt label { width: 57px; }
.dflt select { width: 96px; }
.dflt .wt { height: 25px; }

/* digital outputs */
.digital { left: 0; top: 521px; width: 492px; height: 269px; background: linear-gradient(#bfcde0, #d5e3f0 31px); padding: 0 8px 7px 5px; }
.digital .client { display: flex; justify-content: space-between; padding: 0 3px 0 6px; }
.dleft { width: 234px; padding-top: 7px; }
.mutes { display: flex; gap: 1px; }
.mutes .b { flex: 1; height: 24px; }
.mutes .wide { flex: none; width: 122px; }
.state { text-align: center; padding: 6px 0 3px; }
.src label { width: 45px; }
.src #o1 { width: 121px; }
.dleft fieldset { margin-top: 4px; height: 143px; }
.rate { padding-left: 5px; height: 20px; }
.rate label { width: 99px; }
.rate select { width: 103px; margin-right: 4px; }
.dev { padding-left: 5px; height: 20px; margin-top: 3px; }
.dev label { width: 86px; padding-left: 5px; }
.dev input:not([type]) { width: 40px; margin-right: 6px; }
.dleft h3 { display: flex; align-items: center; gap: 5px; font-size: 11px; margin: 1px 0 3px; }
.dleft h3::before, .dleft h3::after { content: ""; height: 1px; background: #a0a0a0; width: 5px; }
.dleft h3::after { flex: 1; }
.rsrc { padding-left: 4px; height: 21px; }
.rsrc label { width: 37px; }
.rsrc select { width: 187px; }
.term { padding-left: 4px; margin-top: 4px; height: 16px; }
.term label { padding-left: 6px; }
.fr { padding-left: 4px; margin-top: 6px; height: 20px; }
.fr > span:first-child { width: 54px; }
.fr .a { width: 67px; margin-right: 2px; }
.fr .hz { width: 34px; }
.fr .c { width: 44px; margin-right: 4px; }
.data { width: 218px; height: 217px; }
.sec + .sec { border-top: 1px solid #a0a0a0; }
.sec { padding-left: 6px; }
.s1 { padding: 7px 5px 0; height: 87px; }
.two-b { display: flex; gap: 4px; }
.two-b .b { flex: 1; height: 23px; }
.valid { justify-content: space-between; margin-top: 7px; }
.valid select { width: 55px; padding-left: 1px; }
.wl { height: 20px; margin-top: 6px; }
.wl > label { width: 57px; }
.wl > label:last-child { width: auto; padding-left: 6px; }
.spin { display: flex; width: 35px; height: 19px; background: #fff; border: 1px solid; border-color: #a0a0a0 #fff #fff #a0a0a0; box-shadow: inset 1px 1px #696969; }
.spin input:not([type]) { width: 17px; border: 0; box-shadow: none; background: none; height: 17px; padding: 0 0 0 2px; }
.spin > span { flex: 1; display: flex; flex-direction: column; padding-top: 1px; }
.spin button { flex: 1; border: 1px solid; border-color: #fff #696969 #696969 #fff; background: #f0f0f0; line-height: 0; }
.spin svg { width: 15px; height: 6px; display: block; }
.bits { width: 28px; padding-left: 3px; }
.dith { height: 33px; }
.dith label { width: 67px; }
.dith select { width: 137px; }
.dc { height: 32px; }
.dc label { width: 49px; }
.dc input { width: 52px; margin-right: 4px; }
.dc select { width: 53px; margin-right: 4px; }
.dc .b { width: 21px; }
.split { height: 34px; }
.split label { padding-left: 5px; }

/* legend */
.legend { left: 242px; top: 821px; width: 222px; height: 84px; background: #98c0ce; border: 1px solid #7d9faa; border-radius: 0; padding: 0 6px; }
.legend header { display: flex; align-items: center; height: 29px; padding-right: 3px; }
.legend h2 { flex: 1; text-align: center; padding-left: 22px; font: 17px/24px "Noto Sans", sans-serif; color: #3c4a60; }
.legend header button { width: 19px; height: 19px; border: 0; background: #c8504f; }
.legend header svg { width: 19px; height: 19px; display: block; }
.legend ul { background: #f0f0f0; border: 1px solid #fff; border-top-color: #a0a0a0; padding: 1px 2px 0 2px; height: 39px; }
.legend li { display: flex; align-items: center; height: 18px; font: 13px/17px "Noto Sans", sans-serif; }
.legend li input { margin-right: 3px; }
.legend label { flex: 1; display: flex; align-items: center; gap: 6px; white-space: nowrap; }
.legend .sel label { background: #3399ff; color: #fff; }
.tr { width: 16px; height: 12px; flex: none; }
.legend .ico { width: 14px; height: 15px; }

.mark { position: absolute; border: 3px solid #fa3434; }
.m1 { left: 297px; top: 261px; width: 163px; height: 27px; }
.m2 { left: 97px; top: 633px; width: 142px; height: 48px; }
.m3 { left: 107px; top: 796px; width: 175px; height: 66px; }

.scroll { position: absolute; right: 2px; top: 0; bottom: 0; width: 17px; background: #f0f0f0; border-left: 1px solid #fff; display: flex; flex-direction: column; }
.scroll svg { width: 16px; height: 17px; flex: none; }
.scroll span { flex: 0 0 824px; margin-bottom: auto; background: #cdcdcd; }
```
FILE: chart.js
```javascript
const NS = 'http://www.w3.org/2000/svg';
const W = 1304, H = 742, FMIN = 10, FMAX = 96000;
const xOf = f => Math.round(W * Math.log(f / FMIN) / Math.log(FMAX / FMIN));
const grid = document.getElementById('gridlines');

function line(x1, y1, x2, y2, cls) {
  const el = document.createElementNS(NS, 'line');
  Object.entries({ x1, y1, x2, y2, class: cls }).forEach(([k, v]) => el.setAttribute(k, v));
  grid.appendChild(el);
}

for (let decade = 10; decade < FMAX; decade *= 10) {
  for (let n = 1; n < 10; n++) {
    const f = decade * n;
    if (f <= FMIN || f >= FMAX) continue;
    line(xOf(f), 0, xOf(f), n === 1 ? H + 8 : H, n === 1 ? 'major' : 'minor');
  }
}
line(W, 0, W, H + 8, 'major');
for (let i = 0; i < 9; i++) {
  const y = Math.round(H * i / 9);
  line(-6, y, W, y, 'level');
}
line(0, 0, 0, H + 8, 'axis');
line(-6, H, W, H, 'axis');

// Low band, fundamental peak and first harmonics
const pts = [[0,627],[220,607],[319,626],[376,620],[417,632],[449,610],[474,627],[496,619],[516,636],[532,613],[548,615],[560,629],[574,630],[584,635],[596,626],[598,560],[603,464],[610,390],[617,330],[624,248],[633,167],[640,109],[645,90],[650,80],[655,78],[660,81],[664,94],[668,121],[676,167],[681,226],[687,293],[690,360],[692,440],[693,525],[696,564]];

// Upper band on a finer raster
const upper = [336,330,345,322,353,370,369,470,379,397,388,465,396,465,403,705,410,436,417,485,428,330,438,200,444,198,452,250,457,388,464,385,469,343,483,375,487,465,495,440,508,338,515,345,523,400,533,410,543,360,551,215,556,197,562,240,568,390,575,500,583,350,590,352,597,372,605,340,615,395,623,492,631,475,636,378,645,420,648,440,650,593,654,515,660,535,664,420,670,450,679,325,684,360,687,525,692,530,698,308,706,380,712,385,716,530,719,360,728,653,738,330,748,480,758,360,764,398,771,375,776,420,779,390,788,566,793,328,802,480,805,362,813,515,817,412,823,563,828,465,831,325,838,400,846,683,851,335,858,508,861,262,868,430,872,340,880,415,885,458,891,298,897,510,904,360,910,600,914,686,918,365,922,535,928,420,936,335,945,575,953,333,957,480,964,330,969,558,976,330,984,480,990,333,999,575,1004,325,1012,350,1016,737,1023,310,1030,470,1036,659,1045,345,1054,305,1062,540];
const put = (x, y) => pts.push([528 + x / 1.96, 497 + y / 3]);
for (let i = 0; i < upper.length; i += 2) put(upper[i], upper[i + 1]);

// Noise floor with its visible spurs
const spurs = [[1077,560],[1089,648],[1093,297],[1110,300],[1124,300],[1137,303],[1152,600],[1165,608],[1170,310],[1193,659],[1243,590],[1265,594],[1299,662],[1325,620],[1330,293],[1346,640],[1360,648],[1373,175],[1378,737],[1404,636],[1410,280],[1420,713],[1443,275],[1453,638],[1459,695],[1493,270],[1504,262],[1516,633]];
let seed = 7;
const rnd = () => (seed = (seed * 16807) % 2147483647) / 2147483647;
let x = 1065, up = true, s = 0;
while (x < 1519) {
  const t = (x - 1065) / 454;
  if (s < spurs.length && x >= spurs[s][0]) { put(...spurs[s]); s++; }
  else put(x, up ? 318 + rnd() * 90 : 440 + rnd() * rnd() * 160);
  up = !up;
  x += 2.7 - 2.1 * t;
}
document.getElementById('fftline').setAttribute('points', pts.map(p => p[0].toFixed(1) + ',' + p[1].toFixed(1)).join(' '));
```
